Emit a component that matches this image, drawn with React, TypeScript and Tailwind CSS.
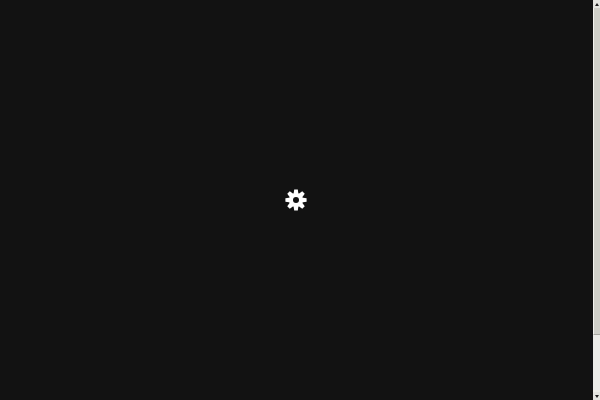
const teeth = [0, 45, 90, 135, 180, 225, 270, 315];

function Gear() {
  return (
    <svg viewBox="0 0 22 22" className="h-[22px] w-[22px]">
      {teeth.map((a) => (
        <path key={a} d="M9.2 0.4H12.8L13.5 5.5H8.5Z" fill="#fff" transform={`rotate(${a} 11 11)`} />
      ))}
      <circle cx="11" cy="11" r="7" fill="#fff" />
      <circle cx="11" cy="11" r="3" fill="#121212" />
    </svg>
  );
}

export default function App() {
  return (
    <div className="flex h-[400px] w-[600px] overflow-hidden bg-[#121212]">
      <main className="flex flex-1 items-center justify-center pr-[1px]">
        <Gear />
      </main>
      <div className="flex w-[7px] flex-col bg-[#ecece8]">
        <div className="flex h-[8px] items-center justify-center bg-[#e4e4e0]">
          <div className="h-0 w-0 border-x-[2px] border-b-[3px] border-x-transparent border-b-[#222]" />
        </div>
        <div className="h-[327px] border-b border-l border-b-[#a8a8a2] border-l-[#f2f2ee] bg-[#cfcfc8]" />
        <div className="flex-1" />
        <div className="flex h-[8px] items-center justify-center bg-[#e4e4e0]">
          <div className="h-0 w-0 border-x-[2px] border-t-[3px] border-x-transparent border-t-[#222]" />
        </div>
      </div>
    </div>
  );
}
